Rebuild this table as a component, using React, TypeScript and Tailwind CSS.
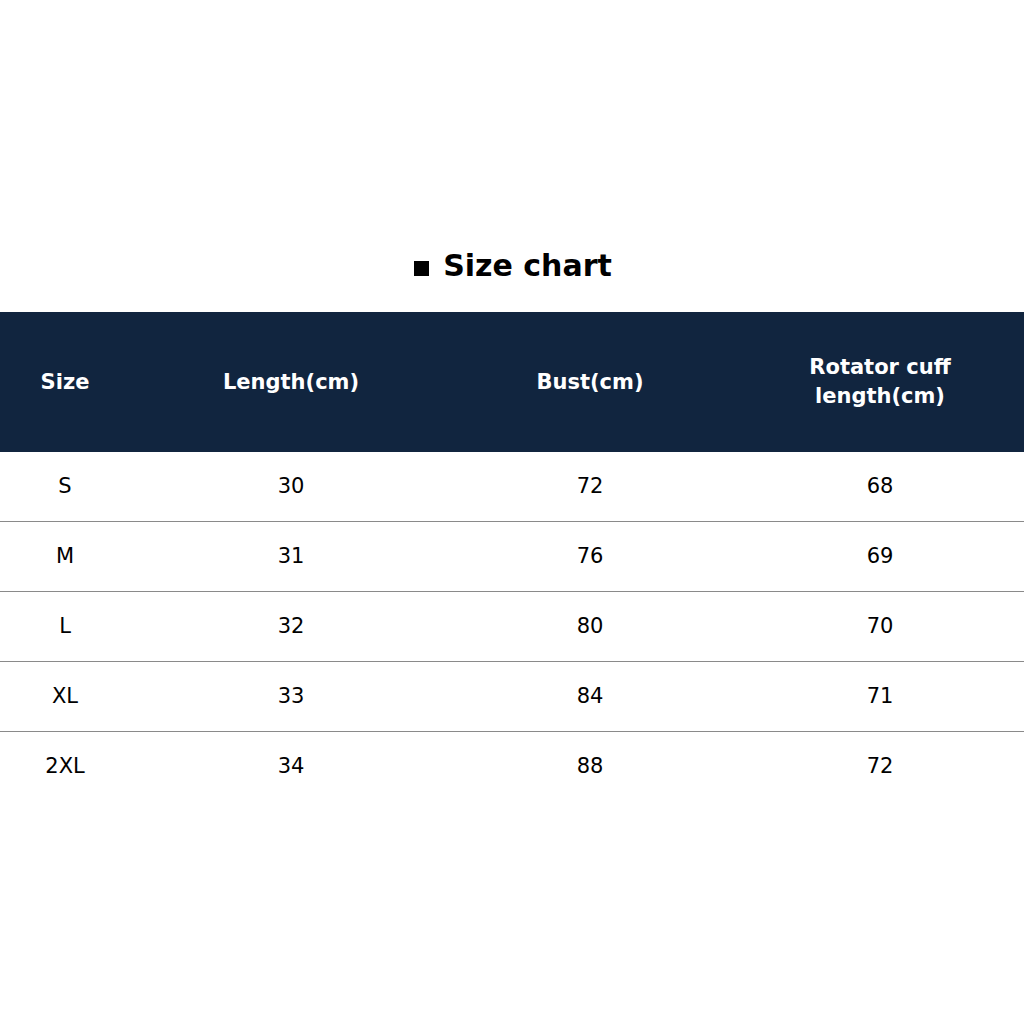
const rows = [
  ["S", "30", "72", "68"],
  ["M", "31", "76", "69"],
  ["L", "32", "80", "70"],
  ["XL", "33", "84", "71"],
  ["2XL", "34", "88", "72"],
];

const cols = "grid grid-cols-[130px_322px_276px_304px]";

export default function App() {
  return (
    <div
      className="w-[1024px] h-[1024px] bg-white text-black"
      style={{ fontFamily: '"DejaVu Sans", "Open Sans", sans-serif' }}
    >
      <div className="pt-[246px] h-[312px]">
        <h1 className="flex items-center justify-center gap-[14px] text-[30px] leading-[40px] font-bold pl-[2px]">
          <span className="inline-block w-[15px] h-[15px] bg-black mt-[5px]" />
          <span>Size chart</span>
        </h1>
      </div>

      <div className={`${cols} h-[140px] bg-[#11253f] text-white font-bold text-[21px] leading-[29px]`}>
        <div className="flex items-center justify-center">Size</div>
        <div className="flex items-center justify-center">Length(cm)</div>
        <div className="flex items-center justify-center">Bust(cm)</div>
        <div className="flex items-center justify-center text-center">
          Rotator cuff
          <br />
          length(cm)
        </div>
      </div>

      {rows.map((r, i) => (
        <div
          key={r[0]}
          className={`${cols} h-[70px] text-[21px] ${i < rows.length - 1 ? "border-b border-[#8a8a8a]" : ""}`}
        >
          {r.map((c, j) => (
            <div key={j} className="flex items-center justify-center">
              {c}
            </div>
          ))}
        </div>
      ))}
    </div>
  );
}
